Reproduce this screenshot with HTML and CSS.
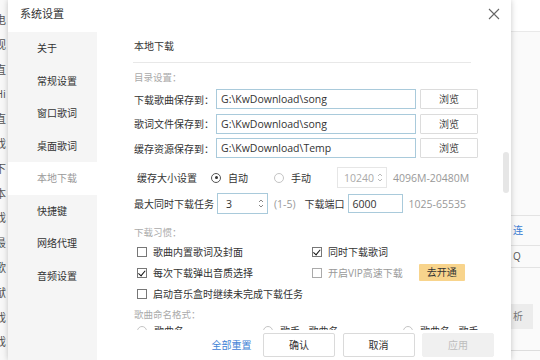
FILE: index.html
```html
<!DOCTYPE html>
<html lang="zh-CN">
<head>
<meta charset="utf-8">
<title>系统设置</title>
<link rel="stylesheet" href="styles.css">
</head>
<body>
<div class="screen">
  <div class="bg-left">
    <span>电</span><span>视</span><span>直</span><span>Hi</span><span>直</span><span>戏</span><span>下</span><span>本</span><span>戏</span><span>最</span><span>歌</span><span>献</span><span>戏</span><span>戏</span>
  </div>

  <div class="dialog">
    <div class="titlebar">
      <div class="title">系统设置</div>
      <svg class="close" width="12" height="12" viewBox="0 0 12 12"><path d="M1 1L11 11M11 1L1 11" stroke="#666" stroke-width="1.1" fill="none"/></svg>
    </div>
    <div class="body">
      <ul class="sidebar">
        <li>关于</li>
        <li>常规设置</li>
        <li>窗口歌词</li>
        <li>桌面歌词</li>
        <li class="active">本地下载</li>
        <li>快捷键</li>
        <li>网络代理</li>
        <li>音频设置</li>
      </ul>
      <div class="main">
        <div class="content">
          <div class="heading">本地下载</div>
          <div class="section-title">目录设置：</div>
          <div class="dir-rows">
            <div class="dir-row">
              <span class="label">下载歌曲保存到：</span>
              <div class="path-input">G:\KwDownload\song</div>
              <div class="btn-browse">浏览</div>
            </div>
            <div class="dir-row">
              <span class="label">歌词文件保存到：</span>
              <div class="path-input">G:\KwDownload\song</div>
              <div class="btn-browse">浏览</div>
            </div>
            <div class="dir-row">
              <span class="label">缓存资源保存到：</span>
              <div class="path-input">G:\KwDownload\Temp</div>
              <div class="btn-browse">浏览</div>
            </div>
          </div>

          <div class="row cache-row">
            <span class="cache-label">缓存大小设置</span>
            <span class="radio checked"></span><span class="opt">自动</span>
            <span class="radio off"></span><span class="opt">手动</span>
            <div class="num-input disabled cache-input">
              <span>10240</span>
              <svg class="spin" width="6" height="11" viewBox="0 0 6 11"><path d="M1 4L3 2L5 4M1 7L3 9L5 7" stroke="#bbb" fill="none"/></svg>
            </div>
            <span class="hint">4096M-20480M</span>
          </div>

          <div class="row max-row">
            <span class="label">最大同时下载任务</span>
            <div class="num-input task-input">
              <span>3</span>
              <svg class="spin" width="6" height="11" viewBox="0 0 6 11"><path d="M1 4L3 2L5 4M1 7L3 9L5 7" stroke="#888" fill="none"/></svg>
            </div>
            <span class="hint range">(1-5)</span>
            <span class="port-label">下载端口</span>
            <div class="num-input port-input"><span>6000</span></div>
            <span class="hint">1025-65535</span>
          </div>

          <div class="section-title habit">下载习惯：</div>
          <div class="check-grid">
            <div class="check"><span class="box"></span><span>歌曲内置歌词及封面</span></div>
            <div class="check"><span class="box on"></span><span>同时下载歌词</span></div>
            <div class="check"><span class="box on"></span><span>每次下载弹出音质选择</span></div>
            <div class="check vip"><span class="box dim"></span><span class="dim-text">开启VIP高速下载</span><span class="vip-btn">去开通</span></div>
            <div class="check wide"><span class="box"></span><span>启动音乐盒时继续未完成下载任务</span></div>
          </div>
          <div class="section-title naming">歌曲命名格式：</div>
          <div class="naming-row">
            <div class="name-opt n1"><span class="radio off"></span><span>歌曲名</span></div>
            <div class="name-opt n2"><span class="radio off"></span><span>歌手 - 歌曲名</span></div>
            <div class="name-opt n3"><span class="radio off"></span><span>歌曲名 - 歌手</span></div>
          </div>
        </div>
        <div class="footer">
          <span class="reset">全部重置</span>
          <div class="btn">确认</div>
          <div class="btn">取消</div>
          <div class="btn disabled">应用</div>
        </div>
        <div class="thumb"></div>
      </div>
    </div>
  </div>

  <div class="bg-right">
    <div class="r-top"></div>
    <div class="r-gap"></div>
    <div class="r-item blue">连</div>
    <div class="r-item">Q</div>
    <div class="r-space"></div>
    <div class="r-box">析</div>
    <div class="r-end"></div>
  </div>
</div>
</body>
</html>
```
FILE: styles.css
```css
* { box-sizing: border-box; margin: 0; padding: 0; }
html, body { width: 540px; height: 360px; overflow: hidden; }
body {
  font-family: "Open Sans", "Noto Sans CJK SC", sans-serif;
  font-size: 10px;
  color: #333;
  background: #f7f7f7;
}
.screen { display: flex; width: 540px; height: 360px; }

.bg-left {
  width: 8px;
  flex: none;
  overflow: hidden;
  display: flex;
  flex-direction: column;
  padding-top: 8px;
  background: #f8f8f8;
}
.bg-left span {
  display: block;
  height: 24.8px;
  line-height: 24.8px;
  margin-left: -5px;
  font-size: 11px;
  color: #555;
  white-space: nowrap;
}

.dialog {
  width: 503px;
  flex: none;
  background: #fff;
  display: flex;
  flex-direction: column;
  box-shadow: 0 0 6px rgba(0,0,0,0.22);
  position: relative;
  z-index: 2;
}
.titlebar {
  height: 32px;
  display: flex;
  justify-content: space-between;
  align-items: flex-start;
  padding: 5px 11px 0 12px;
}
.title { font-size: 11px; line-height: 18px; color: #333; }
.close { margin-top: 3px; }

.body { flex: 1; display: flex; min-height: 0; }
.sidebar {
  width: 89px;
  flex: none;
  background: #f5f5f5;
  list-style: none;
}
.sidebar li {
  height: 32.5px;
  line-height: 32.5px;
  padding-left: 29px;
  color: #333;
}
.sidebar li.active { background: #fff; color: #999; }

.main {
  flex: 1;
  position: relative;
  display: flex;
  flex-direction: column;
  min-width: 0;
}
.content {
  flex: 1;
  overflow: hidden;
  padding-left: 37px;
  display: flex;
  flex-direction: column;
  align-items: flex-start;
}
.heading {
  margin-top: 4px;
  line-height: 20px;
  padding-bottom: 6px;
  border-bottom: 1px solid #e8e8e8;
  width: 338px;
  margin-left: -1px;
  padding-left: 1px;
}
.section-title {
  margin-top: 7px;
  line-height: 16px;
  color: #aaa;
  font-size: 9.5px;
}
.dir-rows { margin-top: 3px; display: flex; flex-direction: column; gap: 4.5px; }
.dir-row { display: flex; align-items: center; height: 20px; }
.label { width: 82px; flex: none; white-space: nowrap; }
.path-input {
  width: 200px;
  height: 20px;
  border: 1px solid #a9cadb;
  padding-left: 4px;
  line-height: 18px;
  font-size: 10.5px;
  color: #333;
}
.btn-browse {
  margin-left: 4px;
  width: 58px;
  height: 20px;
  border: 1px solid #dcdcdc;
  border-radius: 1px;
  text-align: center;
  line-height: 18px;
  color: #444;
}

.row { display: flex; align-items: center; height: 21px; }
.cache-row { margin-top: 9px; padding-left: 3px; }
.cache-label { width: 74px; }
.radio {
  width: 10px;
  height: 10px;
  border-radius: 50%;
  border: 1px solid #555;
  flex: none;
  position: relative;
}
.radio.checked::after {
  content: "";
  position: absolute;
  left: 2.5px; top: 2.5px;
  width: 3px; height: 3px;
  border-radius: 50%;
  background: #333;
}
.radio.off { border-color: #c4c4c4; }
.opt { margin-left: 7px; width: 46px; }
.num-input {
  height: 21px;
  border: 1px solid #a9cadb;
  display: flex;
  align-items: center;
  justify-content: space-between;
  padding: 0 3px 0 8px;
  font-size: 10.5px;
}
.num-input.disabled { border-color: #e6e6e6; color: #aaa; }
.cache-input { width: 50px; margin-left: 0; padding-left: 6px; }
.hint { color: #999; font-size: 10.5px; margin-left: 6px; }
.max-row { margin-top: 5px; }
.label.max { width: 83px; }
.task-input { width: 51px; margin-left: 1px; }
.range { margin-left: 6px; }
.port-label { margin-left: 9px; width: 43px; }
.port-input { width: 55px; height: 19px; padding-left: 4px; }

.habit { margin-top: 11px; }
.check-grid {
  display: grid;
  grid-template-columns: 175px 180px;
  grid-auto-rows: 21px;
  padding-left: 3px;
}
.check { display: flex; align-items: center; white-space: nowrap; }
.check.wide { grid-column: 1 / 3; }
.box {
  width: 10px;
  height: 10px;
  border: 1px solid #777;
  margin-right: 6px;
  flex: none;
  position: relative;
}
.box.on::after {
  content: "";
  position: absolute;
  left: 2px; top: 0px;
  width: 3px; height: 5.5px;
  border: solid #111;
  border-width: 0 1.6px 1.6px 0;
  transform: rotate(40deg);
}
.box.dim { border-color: #aaa; }
.dim-text { color: #999; }
.vip-btn {
  margin-left: 16px;
  width: 46px;
  height: 17px;
  line-height: 17px;
  text-align: center;
  background: #f8d48c;
  color: #333;
  border-radius: 1px;
}
.naming { margin-top: 3px; }
.naming-row { display: flex; height: 21px; align-items: center; padding-left: 3px; }
.name-opt { display: flex; align-items: center; gap: 7px; }
.name-opt.n1 { width: 126px; }
.name-opt.n2 { width: 140px; }

.footer {
  height: 30px;
  flex: none;
  background: #fff;
  display: flex;
  justify-content: flex-end;
  align-items: flex-start;
  padding: 3px 17px 0 0;
  gap: 7.5px;
}
.reset { color: #3f82d6; line-height: 24px; margin-right: 4px; }
.btn {
  width: 72px;
  height: 24px;
  border: 1px solid #dadada;
  border-radius: 2px;
  text-align: center;
  line-height: 22px;
  color: #333;
  background: #fff;
}
.btn.disabled { background: #f0f0f0; border-color: #f0f0f0; color: #bdbdbd; }

.thumb {
  position: absolute;
  right: 2px;
  top: 120px;
  width: 6px;
  height: 41px;
  border-radius: 3px;
  background: #e6e6e6;
}

.bg-right {
  flex: 1;
  display: flex;
  flex-direction: column;
  background: #fafafa;
  overflow: hidden;
}
.r-top { height: 32px; border-bottom: 1px solid #e9e9e9; background: #fff; }
.r-gap { height: 184px; border-bottom: 1px solid #e3e3e3; }
.r-item {
  height: 30px;
  line-height: 29px;
  border-bottom: 1px solid #e3e3e3;
  padding-left: 2px;
  font-size: 10px;
  color: #555;
  white-space: nowrap;
}
.r-item.blue { color: #3c7ed4; }
.r-item + .r-item { height: 22px; line-height: 21px; }
.r-space { height: 36px; }
.r-box {
  height: 25px;
  line-height: 25px;
  background: #ececec;
  color: #777;
  padding-left: 2px;
  width: 22px;
}
.r-end { height: 22px; border-bottom: 1px solid #ddd; }
```
